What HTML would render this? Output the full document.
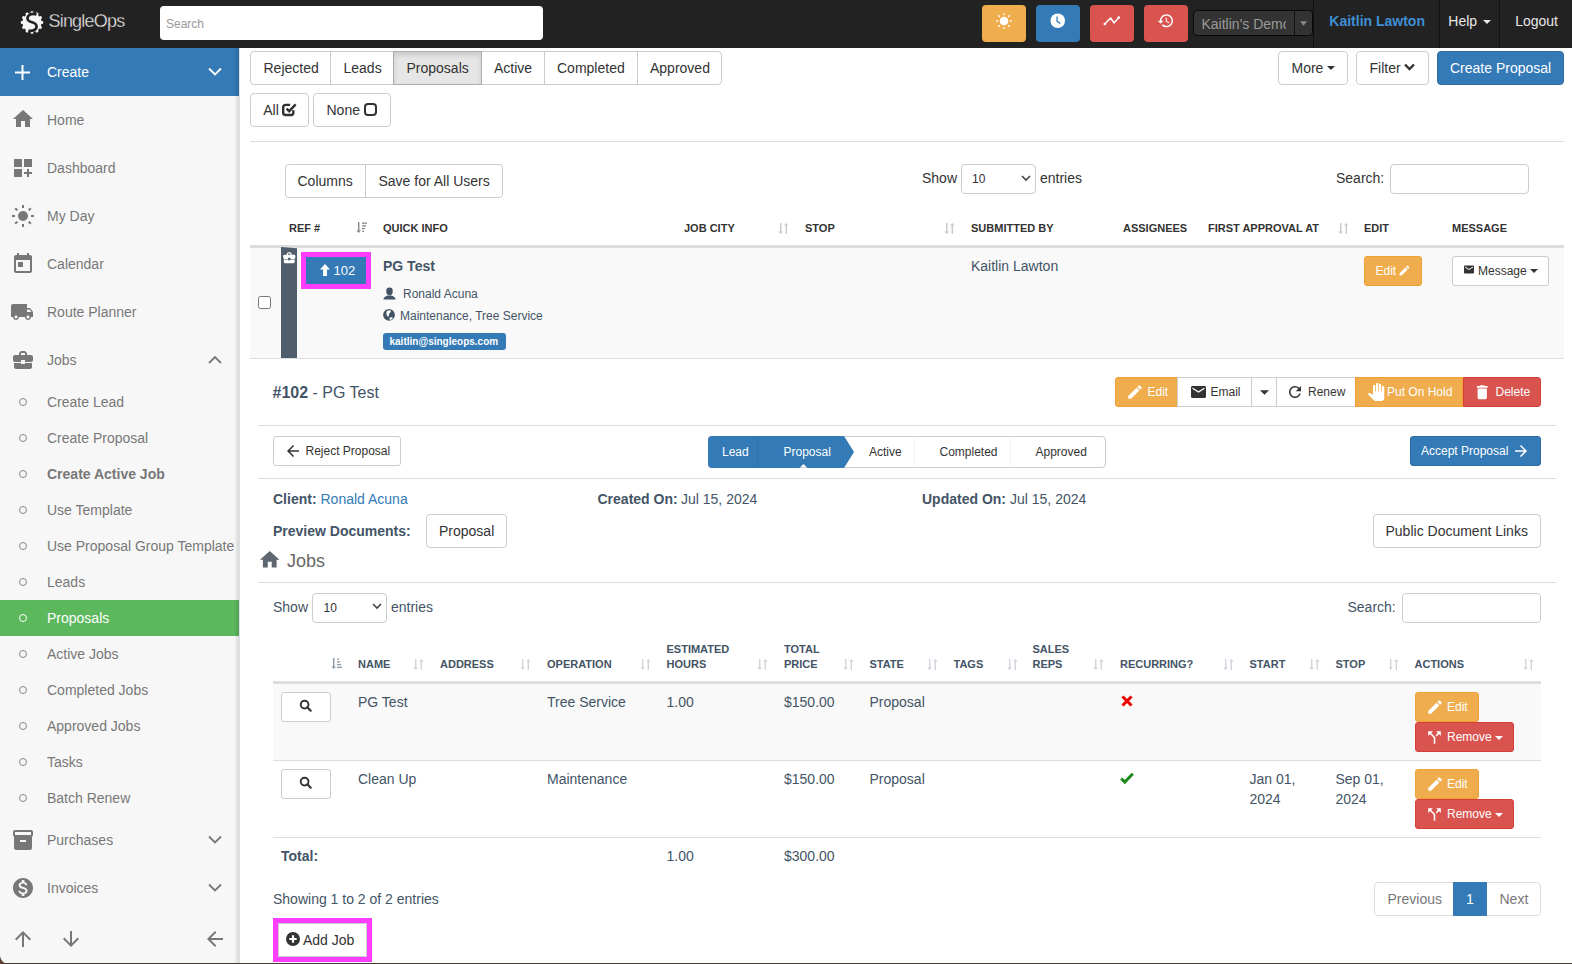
<!DOCTYPE html>
<html><head><meta charset="utf-8">
<style>
*{box-sizing:border-box;margin:0;padding:0}
html,body{width:1572px;height:964px;overflow:hidden;background:#fff;font-family:"Liberation Sans",sans-serif;font-size:14px;color:#333}
.a{position:absolute}
.t{position:absolute;white-space:nowrap;line-height:1}
svg{display:block;overflow:visible}
</style></head><body>
<div class="a" style="left:0px;top:0px;width:1572px;height:48px;background:#222"></div>
<svg class="a" style="left:18.5px;top:10.5px;" width="26" height="22" viewBox="0 0 26 22"><g fill="#f4f4f4"><rect x="11.6" y="0.3" width="2.8" height="4" rx="0.8" transform="rotate(0 13 11.5)"/><rect x="11.6" y="0.3" width="2.8" height="4" rx="0.8" transform="rotate(30 13 11.5)"/><rect x="11.6" y="0.3" width="2.8" height="4" rx="0.8" transform="rotate(60 13 11.5)"/><rect x="11.6" y="0.3" width="2.8" height="4" rx="0.8" transform="rotate(90 13 11.5)"/><rect x="11.6" y="0.3" width="2.8" height="4" rx="0.8" transform="rotate(120 13 11.5)"/><rect x="11.6" y="0.3" width="2.8" height="4" rx="0.8" transform="rotate(150 13 11.5)"/><rect x="11.6" y="0.3" width="2.8" height="4" rx="0.8" transform="rotate(180 13 11.5)"/><rect x="11.6" y="0.3" width="2.8" height="4" rx="0.8" transform="rotate(210 13 11.5)"/><rect x="11.6" y="0.3" width="2.8" height="4" rx="0.8" transform="rotate(240 13 11.5)"/><rect x="11.6" y="0.3" width="2.8" height="4" rx="0.8" transform="rotate(270 13 11.5)"/><rect x="11.6" y="0.3" width="2.8" height="4" rx="0.8" transform="rotate(300 13 11.5)"/><rect x="11.6" y="0.3" width="2.8" height="4" rx="0.8" transform="rotate(330 13 11.5)"/><circle cx="13" cy="11.5" r="9.6"/></g><path d="M17.5 3.6C13 1.6 7.6 4 8.6 8.2 9.6 12.2 17.6 10.6 17.6 15.4 17.6 19.2 12.6 20.6 9.4 19.4" stroke="#222" stroke-width="2.6" fill="none"/></svg>
<div class="t" style="left:48.5px;top:12.06px;font-size:18px;color:#f0f0f0;font-weight:normal;letter-spacing:-0.8px;-webkit-text-stroke:0.35px #222">SingleOps</div>
<div class="a" style="left:160px;top:6px;width:383px;height:34px;background:#fff;border-radius:4px"></div>
<div class="t" style="left:166.0px;top:18.34px;font-size:12px;color:#999;font-weight:normal;">Search</div>
<div class="a" style="left:982px;top:5px;width:44px;height:37px;background:#f0ad4e;border-radius:4px"></div>
<div class="a" style="left:1036px;top:5px;width:44px;height:37px;background:#337ab7;border-radius:4px"></div>
<div class="a" style="left:1090px;top:5px;width:44px;height:37px;background:#d9534f;border-radius:4px"></div>
<div class="a" style="left:1144px;top:5px;width:44px;height:37px;background:#d9534f;border-radius:4px"></div>
<svg class="a" style="left:995.8px;top:12.5px;" width="16" height="16" viewBox="0 0 16 16"><g fill="#fff"><rect x="7.3" y="0" width="1.4" height="2.2" rx="0.7" transform="rotate(0 8 8)"/><rect x="7.3" y="0" width="1.4" height="2.2" rx="0.7" transform="rotate(45 8 8)"/><rect x="7.3" y="0" width="1.4" height="2.2" rx="0.7" transform="rotate(90 8 8)"/><rect x="7.3" y="0" width="1.4" height="2.2" rx="0.7" transform="rotate(135 8 8)"/><rect x="7.3" y="0" width="1.4" height="2.2" rx="0.7" transform="rotate(180 8 8)"/><rect x="7.3" y="0" width="1.4" height="2.2" rx="0.7" transform="rotate(225 8 8)"/><rect x="7.3" y="0" width="1.4" height="2.2" rx="0.7" transform="rotate(270 8 8)"/><rect x="7.3" y="0" width="1.4" height="2.2" rx="0.7" transform="rotate(315 8 8)"/><circle cx="8" cy="8" r="4.3"/></g></svg>
<svg class="a" style="left:1050px;top:13.2px;" width="15.5" height="15.5" viewBox="0 0 16 16"><circle cx="8" cy="8" r="7.5" fill="#fff"/><path d="M7.3 4v4.6l3 2" stroke="#337ab7" stroke-width="1.3" fill="none" stroke-linecap="round"/></svg>
<svg class="a" style="left:1102px;top:16px;" width="19" height="11" viewBox="0 0 19 11"><g fill="#fff" stroke="#fff"><polyline points="2.8,8.1 8.6,2 12,6.9 16.8,1.6" fill="none" stroke-width="1.5" stroke-linejoin="round"/><circle cx="2.8" cy="8.1" r="1.3" stroke="none"/><circle cx="16.8" cy="1.6" r="1.3" stroke="none"/></g></svg>
<svg class="a" style="left:1157px;top:11.8px;" width="17.5" height="17.5" viewBox="0 0 24 24"><path d="M13 3c-4.97 0-9 4.03-9 9H1l3.89 3.89.07.14L9 12H6c0-3.87 3.13-7 7-7s7 3.13 7 7-3.13 7-7 7c-1.93 0-3.68-.79-4.94-2.06l-1.42 1.42C8.27 19.99 10.51 21 13 21c4.97 0 9-4.03 9-9s-4.03-9-9-9zm-1 5v5l4.28 2.54.72-1.21-3.5-2.08V8H12z" fill="#fff"/></svg>
<div class="a" style="left:1193px;top:10px;width:120px;height:26px;background:#333;border:1px solid #090909;border-radius:4px"></div>
<div class="a" style="left:1294px;top:11px;width:1px;height:24px;background:#111"></div>
<div class="t" style="left:1201.5px;top:16.75px;font-size:14px;color:#9a9a9a;width:84.5px;overflow:hidden;line-height:1">Kaitlin's Demo</div>
<svg class="a" style="left:1300px;top:21px;" width="7" height="5" viewBox="0 0 8 5"><path d="M0 0h8L4 5z" fill="#888"/></svg>
<div class="a" style="left:1313px;top:0px;width:1px;height:48px;background:#111"></div>
<div class="a" style="left:1439px;top:0px;width:1px;height:48px;background:#111"></div>
<div class="a" style="left:1499px;top:0px;width:1px;height:48px;background:#111"></div>
<div class="t" style="left:1329.3px;top:14.15px;font-size:14px;color:#3f8ed3;font-weight:bold;">Kaitlin Lawton</div>
<div class="t" style="left:1448.3px;top:14.15px;font-size:14px;color:#e8e8e8;font-weight:normal;">Help</div>
<svg class="a" style="left:1483px;top:20px;" width="8" height="4" viewBox="0 0 8 4"><path d="M0 0h8L4 4z" fill="#e8e8e8"/></svg>
<div class="t" style="left:1515.2px;top:14.15px;font-size:14px;color:#e8e8e8;font-weight:normal;">Logout</div>
<div class="a" style="left:0px;top:48px;width:239px;height:916px;background:#f7f7f7"></div>
<div class="a" style="left:0px;top:48px;width:239px;height:48px;background:#337ab7"></div>
<svg class="a" style="left:15px;top:65px;" width="15" height="15" viewBox="0 0 15 15"><path d="M6.5 0h2v6.5H15v2H8.5V15h-2V8.5H0v-2h6.5z" fill="#fff"/></svg>
<div class="t" style="left:47.0px;top:65.45px;font-size:14px;color:#fff;font-weight:normal;">Create</div>
<svg class="a" style="left:208px;top:67px;" width="14" height="10" viewBox="0 0 14 10"><path d="M1 1.5l6 6 6-6" stroke="#fff" stroke-width="1.8" fill="none"/></svg>
<svg class="a" style="left:11px;top:107px;" width="24" height="24" viewBox="0 0 24 24"><path d="M10 20v-6h4v6h5v-8h3L12 3 2 12h3v8z" fill="#777"/></svg>
<div class="t" style="left:47.0px;top:113.25px;font-size:14px;color:#777;font-weight:normal;">Home</div>
<svg class="a" style="left:11px;top:156px;" width="24" height="24" viewBox="0 0 24 24"><path d="M3 3h8v8H3zm10 0h8v8h-8zM3 13h8v8H3zm15 0h-2v3h-3v2h3v3h2v-3h3v-2h-3z" fill="#777"/></svg>
<div class="t" style="left:47.0px;top:161.25px;font-size:14px;color:#777;font-weight:normal;">Dashboard</div>
<svg class="a" style="left:11px;top:204px;" width="24" height="24" viewBox="0 0 24 24"><g fill="#777"><circle cx="12" cy="12" r="5"/><rect x="11" y="1" width="2" height="3" transform="rotate(0 12 12)"/><rect x="11" y="1" width="2" height="3" transform="rotate(45 12 12)"/><rect x="11" y="1" width="2" height="3" transform="rotate(90 12 12)"/><rect x="11" y="1" width="2" height="3" transform="rotate(135 12 12)"/><rect x="11" y="1" width="2" height="3" transform="rotate(180 12 12)"/><rect x="11" y="1" width="2" height="3" transform="rotate(225 12 12)"/><rect x="11" y="1" width="2" height="3" transform="rotate(270 12 12)"/><rect x="11" y="1" width="2" height="3" transform="rotate(315 12 12)"/></g></svg>
<div class="t" style="left:47.0px;top:209.25px;font-size:14px;color:#777;font-weight:normal;">My Day</div>
<svg class="a" style="left:11px;top:252px;" width="24" height="24" viewBox="0 0 24 24"><path d="M19 3h-1V1h-2v2H8V1H6v2H5c-1.11 0-1.99.9-1.99 2L3 19c0 1.1.89 2 2 2h14c1.1 0 2-.9 2-2V5c0-1.1-.9-2-2-2zm0 16H5V8h14v11zM7 10h5v5H7z" fill="#777"/></svg>
<div class="t" style="left:47.0px;top:257.25px;font-size:14px;color:#777;font-weight:normal;">Calendar</div>
<svg class="a" style="left:10px;top:300px;" width="24" height="24" viewBox="0 0 24 24"><path d="M20 8h-3V4H3c-1.1 0-2 .9-2 2v11h2c0 1.66 1.34 3 3 3s3-1.34 3-3h6c0 1.66 1.34 3 3 3s3-1.34 3-3h2v-5l-3-4zM6 18.5c-.83 0-1.5-.67-1.5-1.5s.67-1.5 1.5-1.5 1.5.67 1.5 1.5-.67 1.5-1.5 1.5zm13.5-9l1.96 2.5H17V9.5h2.5zm-1.5 9c-.83 0-1.5-.67-1.5-1.5s.67-1.5 1.5-1.5 1.5.67 1.5 1.5-.67 1.5-1.5 1.5z" fill="#777"/></svg>
<div class="t" style="left:47.0px;top:305.25px;font-size:14px;color:#777;font-weight:normal;">Route Planner</div>
<svg class="a" style="left:11px;top:348px;" width="24" height="24" viewBox="0 0 24 24"><path d="M10 16v-1H3.01L3 19c0 1.11.89 2 2 2h14c1.11 0 2-.89 2-2v-4h-7v1h-4zm10-9h-4.01V5l-2-2h-4l-2 2v2H4c-1.1 0-2 .9-2 2v3c0 1.11.89 2 2 2h6v-2h4v2h6c1.1 0 2-.9 2-2V9c0-1.1-.9-2-2-2zm-6 0h-4V5h4v2z" fill="#777"/></svg>
<div class="t" style="left:47.0px;top:353.25px;font-size:14px;color:#777;font-weight:normal;">Jobs</div>
<svg class="a" style="left:208px;top:355px;" width="14" height="10" viewBox="0 0 14 10"><path d="M1 8l6-6 6 6" stroke="#777" stroke-width="1.8" fill="none"/></svg>
<div class="a" style="left:19px;top:398px;width:8px;height:8px;border:1px solid #888;border-radius:50%"></div>
<div class="t" style="left:47.0px;top:395.15px;font-size:14px;color:#777;font-weight:normal;">Create Lead</div>
<div class="a" style="left:19px;top:434px;width:8px;height:8px;border:1px solid #888;border-radius:50%"></div>
<div class="t" style="left:47.0px;top:431.15px;font-size:14px;color:#777;font-weight:normal;">Create Proposal</div>
<div class="a" style="left:19px;top:470px;width:8px;height:8px;border:1px solid #888;border-radius:50%"></div>
<div class="t" style="left:47.0px;top:467.15px;font-size:14px;color:#777;font-weight:bold;">Create Active Job</div>
<div class="a" style="left:19px;top:506px;width:8px;height:8px;border:1px solid #888;border-radius:50%"></div>
<div class="t" style="left:47.0px;top:503.15px;font-size:14px;color:#777;font-weight:normal;">Use Template</div>
<div class="a" style="left:19px;top:542px;width:8px;height:8px;border:1px solid #888;border-radius:50%"></div>
<div class="t" style="left:47.0px;top:539.15px;font-size:14px;color:#777;font-weight:normal;">Use Proposal Group Template</div>
<div class="a" style="left:19px;top:578px;width:8px;height:8px;border:1px solid #888;border-radius:50%"></div>
<div class="t" style="left:47.0px;top:575.15px;font-size:14px;color:#777;font-weight:normal;">Leads</div>
<div class="a" style="left:0px;top:600px;width:239px;height:36px;background:#5cb85c"></div>
<div class="a" style="left:19px;top:614px;width:8px;height:8px;border:1px solid #fff;border-radius:50%"></div>
<div class="t" style="left:47.0px;top:611.15px;font-size:14px;color:#fff;font-weight:normal;">Proposals</div>
<div class="a" style="left:19px;top:650px;width:8px;height:8px;border:1px solid #888;border-radius:50%"></div>
<div class="t" style="left:47.0px;top:647.15px;font-size:14px;color:#777;font-weight:normal;">Active Jobs</div>
<div class="a" style="left:19px;top:686px;width:8px;height:8px;border:1px solid #888;border-radius:50%"></div>
<div class="t" style="left:47.0px;top:683.15px;font-size:14px;color:#777;font-weight:normal;">Completed Jobs</div>
<div class="a" style="left:19px;top:722px;width:8px;height:8px;border:1px solid #888;border-radius:50%"></div>
<div class="t" style="left:47.0px;top:719.15px;font-size:14px;color:#777;font-weight:normal;">Approved Jobs</div>
<div class="a" style="left:19px;top:758px;width:8px;height:8px;border:1px solid #888;border-radius:50%"></div>
<div class="t" style="left:47.0px;top:755.15px;font-size:14px;color:#777;font-weight:normal;">Tasks</div>
<div class="a" style="left:19px;top:794px;width:8px;height:8px;border:1px solid #888;border-radius:50%"></div>
<div class="t" style="left:47.0px;top:791.15px;font-size:14px;color:#777;font-weight:normal;">Batch Renew</div>
<svg class="a" style="left:11px;top:828px;" width="24" height="24" viewBox="0 0 24 24"><path d="M20 2H4c-1 0-2 .9-2 2v3.01c0 .72.43 1.34 1 1.69V20c0 1.1 1.1 2 2 2h14c.9 0 2-.9 2-2V8.7c.57-.35 1-.97 1-1.69V4c0-1.1-1-2-2-2zm-5 12H9v-2h6v2zm5-7H4V4l16-.02V7z" fill="#777"/></svg>
<div class="t" style="left:47.0px;top:832.85px;font-size:14px;color:#777;font-weight:normal;">Purchases</div>
<svg class="a" style="left:208px;top:835px;" width="14" height="10" viewBox="0 0 14 10"><path d="M1 1.5l6 6 6-6" stroke="#777" stroke-width="1.8" fill="none"/></svg>
<svg class="a" style="left:11px;top:876px;" width="24" height="24" viewBox="0 0 24 24"><path d="M12 2C6.48 2 2 6.48 2 12s4.48 10 10 10 10-4.48 10-10S17.52 2 12 2zm1.41 16.09V20h-2.67v-1.93c-1.71-.36-3.16-1.46-3.27-3.4h1.96c.1 1.05.82 1.87 2.65 1.87 1.96 0 2.4-.98 2.4-1.59 0-.83-.44-1.61-2.67-2.14-2.48-.6-4.18-1.62-4.18-3.67 0-1.72 1.39-2.84 3.11-3.21V4h2.67v1.95c1.86.45 2.79 1.86 2.85 3.39H14.3c-.05-1.11-.64-1.87-2.22-1.87-1.5 0-2.4.68-2.4 1.64 0 .84.65 1.39 2.67 1.91s4.18 1.39 4.18 3.91c-.01 1.83-1.38 2.83-3.12 3.16z" fill="#777"/></svg>
<div class="t" style="left:47.0px;top:881.15px;font-size:14px;color:#777;font-weight:normal;">Invoices</div>
<svg class="a" style="left:208px;top:883px;" width="14" height="10" viewBox="0 0 14 10"><path d="M1 1.5l6 6 6-6" stroke="#777" stroke-width="1.8" fill="none"/></svg>
<div class="a" style="left:234px;top:48px;width:5px;height:916px;background:linear-gradient(to right,rgba(0,0,0,0),rgba(0,0,0,.13))"></div>
<div class="a" style="left:239px;top:48px;width:1px;height:916px;background:#dce2e9"></div>
<svg class="a" style="left:11px;top:927px;" width="24" height="24" viewBox="0 0 24 24"><path d="M4 12l1.41 1.41L11 7.83V20h2V7.83l5.58 5.59L20 12l-8-8-8 8z" fill="#777"/></svg>
<svg class="a" style="left:59px;top:927px;" width="24" height="24" viewBox="0 0 24 24"><path d="M20 12l-1.41-1.41L13 16.17V4h-2v12.17l-5.58-5.59L4 12l8 8 8-8z" fill="#777"/></svg>
<svg class="a" style="left:203px;top:927px;" width="24" height="24" viewBox="0 0 24 24"><path d="M20 11H7.83l5.59-5.59L12 4l-8 8 8 8 1.41-1.41L7.83 13H20v-2z" fill="#777"/></svg>
<div class="a" style="left:250px;top:51px;width:472px;height:34px;background:#fff;border:1px solid #ccc;border-radius:4px"></div>
<div class="a" style="left:330px;top:51px;width:1px;height:34px;background:#ccc"></div>
<div class="a" style="left:393px;top:51px;width:1px;height:34px;background:#ccc"></div>
<div class="a" style="left:481px;top:51px;width:1px;height:34px;background:#ccc"></div>
<div class="a" style="left:544px;top:51px;width:1px;height:34px;background:#ccc"></div>
<div class="a" style="left:637px;top:51px;width:1px;height:34px;background:#ccc"></div>
<div class="a" style="left:394px;top:51px;width:87px;height:34px;background:#e6e6e6;box-shadow:inset 0 3px 5px rgba(0,0,0,.125);border-top:1px solid #adadad;border-bottom:1px solid #adadad"></div>
<div class="a" style="left:393px;top:51px;width:1px;height:34px;background:#adadad"></div>
<div class="a" style="left:481px;top:51px;width:1px;height:34px;background:#adadad"></div>
<div class="t" style="left:263.5px;top:61.25px;font-size:14px;color:#333;font-weight:normal;">Rejected</div>
<div class="t" style="left:343.5px;top:61.25px;font-size:14px;color:#333;font-weight:normal;">Leads</div>
<div class="t" style="left:406.5px;top:61.25px;font-size:14px;color:#333;font-weight:normal;">Proposals</div>
<div class="t" style="left:494.0px;top:61.25px;font-size:14px;color:#333;font-weight:normal;">Active</div>
<div class="t" style="left:557.0px;top:61.25px;font-size:14px;color:#333;font-weight:normal;">Completed</div>
<div class="t" style="left:650.0px;top:61.25px;font-size:14px;color:#333;font-weight:normal;">Approved</div>
<div class="a" style="left:250px;top:93px;width:59px;height:34px;background:#fff;border:1px solid #ccc;border-radius:4px"></div>
<div class="t" style="left:263.2px;top:103.25px;font-size:14px;color:#333;font-weight:normal;">All</div>
<svg class="a" style="left:282px;top:101.7px;" width="15" height="14" viewBox="0 0 15 14"><path d="M11.3 8.2v2.6a2.2 2.2 0 0 1-2.2 2.2H3.4a2.2 2.2 0 0 1-2.2-2.2V5.1a2.2 2.2 0 0 1 2.2-2.2h4.8" stroke="#333" stroke-width="2.4" fill="none"/><path d="M4.6 6.6l2.6 2.6 6.5-6.8" stroke="#333" stroke-width="2.5" fill="none"/></svg>
<div class="a" style="left:313px;top:93px;width:78px;height:34px;background:#fff;border:1px solid #ccc;border-radius:4px"></div>
<div class="t" style="left:326.5px;top:103.25px;font-size:14px;color:#333;font-weight:normal;">None</div>
<div class="a" style="left:363.8px;top:103.1px;width:12.8px;height:12.8px;border:2.6px solid #333;border-radius:4px"></div>
<div class="a" style="left:1278px;top:51px;width:70px;height:34px;background:#fff;border:1px solid #ccc;border-radius:4px"></div>
<div class="t" style="left:1291.5px;top:61.25px;font-size:14px;color:#333;font-weight:normal;">More</div>
<svg class="a" style="left:1327px;top:66px;" width="8" height="4" viewBox="0 0 8 4"><path d="M0 0h8L4 4z" fill="#333"/></svg>
<div class="a" style="left:1356px;top:51px;width:73px;height:34px;background:#fff;border:1px solid #ccc;border-radius:4px"></div>
<div class="t" style="left:1369.5px;top:61.25px;font-size:14px;color:#333;font-weight:normal;">Filter</div>
<svg class="a" style="left:1404px;top:63px;" width="11" height="8" viewBox="0 0 11 8"><path d="M1 1.5l4.5 4.5 4.5-4.5" stroke="#333" stroke-width="2.4" fill="none"/></svg>
<div class="a" style="left:1437px;top:51px;width:127px;height:34px;background:#337ab7;border:1px solid #2e6da4;border-radius:4px"></div>
<div class="t" style="left:1450.0px;top:61.25px;font-size:14px;color:#fff;font-weight:normal;">Create Proposal</div>
<div class="a" style="left:250px;top:141px;width:1314px;height:1px;background:#ddd"></div>
<div class="a" style="left:285px;top:164px;width:218px;height:34px;background:#fff;border:1px solid #ccc;border-radius:4px"></div>
<div class="a" style="left:365px;top:164px;width:1px;height:34px;background:#ccc"></div>
<div class="t" style="left:297.5px;top:174.25px;font-size:14px;color:#333;font-weight:normal;">Columns</div>
<div class="t" style="left:378.5px;top:174.25px;font-size:14px;color:#333;font-weight:normal;">Save for All Users</div>
<div class="t" style="left:922.0px;top:171.15px;font-size:14px;color:#333;font-weight:normal;">Show</div>
<div class="a" style="left:961px;top:164px;width:75px;height:30px;background:#fff;border:1px solid #ccc;border-radius:4px"></div>
<div class="t" style="left:972.0px;top:173.34px;font-size:12px;color:#333;font-weight:normal;">10</div>
<svg class="a" style="left:1021px;top:175px;" width="10" height="7" viewBox="0 0 10 7"><path d="M1 1l4 4 4-4" stroke="#444" stroke-width="1.6" fill="none"/></svg>
<div class="t" style="left:1040.0px;top:171.15px;font-size:14px;color:#333;font-weight:normal;">entries</div>
<div class="t" style="left:1336.0px;top:171.15px;font-size:14px;color:#333;font-weight:normal;">Search:</div>
<div class="a" style="left:1390px;top:164px;width:139px;height:30px;background:#fff;border:1px solid #ccc;border-radius:4px"></div>
<div class="t" style="left:289.0px;top:222.69px;font-size:11px;color:#333;font-weight:bold;">REF #</div>
<div class="t" style="left:383.0px;top:222.69px;font-size:11px;color:#333;font-weight:bold;">QUICK INFO</div>
<div class="t" style="left:684.0px;top:222.69px;font-size:11px;color:#333;font-weight:bold;">JOB CITY</div>
<div class="t" style="left:805.0px;top:222.69px;font-size:11px;color:#333;font-weight:bold;">STOP</div>
<div class="t" style="left:971.0px;top:222.69px;font-size:11px;color:#333;font-weight:bold;">SUBMITTED BY</div>
<div class="t" style="left:1123.0px;top:222.69px;font-size:11px;color:#333;font-weight:bold;">ASSIGNEES</div>
<div class="t" style="left:1208.0px;top:222.69px;font-size:11px;color:#333;font-weight:bold;">FIRST APPROVAL AT</div>
<div class="t" style="left:1364.0px;top:222.69px;font-size:11px;color:#333;font-weight:bold;">EDIT</div>
<div class="t" style="left:1452.0px;top:222.69px;font-size:11px;color:#333;font-weight:bold;">MESSAGE</div>
<svg class="a" style="left:356px;top:222px;" width="11" height="11" viewBox="0 0 11 11"><g fill="#888"><path d="M2 0h1.4v8.5H5L2.7 11 0.4 8.5H2z"/><rect x="6" y="0.5" width="5" height="1.3"/><rect x="6" y="3.2" width="4" height="1.3"/><rect x="6" y="5.9" width="3" height="1.3"/><rect x="6" y="8.6" width="2" height="1.3"/></g></svg>
<svg class="a" style="left:778px;top:223px;" width="11" height="11" viewBox="0 0 11 11"><g fill="#c8c8c8"><path d="M2 0h1.4v8.5H5L2.7 11 0.4 8.5H2z"/><path d="M7.6 11h1.4V2.5h1.6L8.3 0 6 2.5h1.6z"/></g></svg>
<svg class="a" style="left:944px;top:223px;" width="11" height="11" viewBox="0 0 11 11"><g fill="#c8c8c8"><path d="M2 0h1.4v8.5H5L2.7 11 0.4 8.5H2z"/><path d="M7.6 11h1.4V2.5h1.6L8.3 0 6 2.5h1.6z"/></g></svg>
<svg class="a" style="left:1338px;top:223px;" width="11" height="11" viewBox="0 0 11 11"><g fill="#c8c8c8"><path d="M2 0h1.4v8.5H5L2.7 11 0.4 8.5H2z"/><path d="M7.6 11h1.4V2.5h1.6L8.3 0 6 2.5h1.6z"/></g></svg>
<div class="a" style="left:250px;top:245px;width:1314px;height:3px;background:#ddd"></div>
<div class="a" style="left:250px;top:248px;width:1314px;height:110px;background:#f9f9f9"></div>
<div class="a" style="left:250px;top:358px;width:1314px;height:1px;background:#ddd"></div>
<div class="a" style="left:258px;top:296px;width:13px;height:13px;background:#fff;border:1px solid #767676;border-radius:2.5px"></div>
<svg class="a" style="left:281px;top:247px;" width="16" height="111" viewBox="0 0 16 111"><path d="M0 0L16 1.3V111H0z" fill="#4f5d6d"/></svg>
<svg class="a" style="left:281.8px;top:251.2px;" width="14.5" height="13.5" viewBox="0 0 24 22"><path d="M10 15v-1H3.01L3 18c0 1.11.89 2 2 2h14c1.11 0 2-.89 2-2v-4h-7v1h-4zm10-9h-4.01V4l-2-2h-4l-2 2v2H4c-1.1 0-2 .9-2 2v3c0 1.11.89 2 2 2h6v-2h4v2h6c1.1 0 2-.9 2-2V8c0-1.1-.9-2-2-2zm-6 0h-4V4h4v2z" fill="#fff"/></svg>
<div class="a" style="left:301px;top:252px;width:70px;height:37px;background:#ff3dff"></div>
<div class="a" style="left:306px;top:257px;width:60px;height:27px;background:#337ab7"></div>
<svg class="a" style="left:320px;top:264px;" width="10" height="12" viewBox="0 0 10 12"><path d="M5 0L0 5.5h3V12h4V5.5h3z" fill="#fff"/></svg>
<div class="t" style="left:333.5px;top:264.30px;font-size:13px;color:#fff;font-weight:normal;">102</div>
<div class="t" style="left:383.0px;top:259.35px;font-size:14px;color:#435466;font-weight:bold;">PG Test</div>
<svg class="a" style="left:382.5px;top:286.5px;" width="13" height="13" viewBox="0 0 13 13"><rect x="3.3" y="0.4" width="6.4" height="7.8" rx="3.1" fill="#435466"/><path d="M0.3 12.4C0.6 10.6 2.4 9.3 4.4 8.5H8.6C10.6 9.3 12.4 10.6 12.7 12.4z" fill="#435466"/></svg>
<div class="t" style="left:403.0px;top:287.84px;font-size:12px;color:#435466;font-weight:normal;">Ronald Acuna</div>
<svg class="a" style="left:383px;top:309px;" width="12" height="12" viewBox="0 0 12 12"><circle cx="6" cy="5.9" r="5.9" fill="#435466"/><path d="M3.5 2.8L5 1.2L8 1.5L7.3 3.4L6.1 4.7L5.9 6.5L5.1 7.9L3.9 6.6L3.3 4.3z M6.1 9.8L7.5 8.2L9.8 8.3L8.9 10.2L7 10.9z" fill="#f9f9f9"/></svg>
<div class="t" style="left:400.0px;top:309.64px;font-size:12px;color:#435466;font-weight:normal;">Maintenance, Tree Service</div>
<div class="a" style="left:383px;top:333px;width:123px;height:17px;background:#337ab7;border-radius:3px"></div>
<div class="t" style="left:389.5px;top:337.14px;font-size:10px;color:#fff;font-weight:bold;">kaitlin@singleops.com</div>
<div class="t" style="left:971.0px;top:259.15px;font-size:14px;color:#435466;font-weight:normal;">Kaitlin Lawton</div>
<div class="a" style="left:1364px;top:256px;width:58px;height:30px;background:#f0ad4e;border:1px solid #eea236;border-radius:3px"></div>
<div class="t" style="left:1375.5px;top:265.34px;font-size:12px;color:#fff;font-weight:normal;">Edit</div>
<svg class="a" style="left:1397.5px;top:264px;" width="13" height="13" viewBox="0 0 24 24"><path d="M3 17.25V21h3.75L17.81 9.94l-3.75-3.75L3 17.25zM20.71 7.04a1 1 0 0 0 0-1.41l-2.34-2.34a1 1 0 0 0-1.41 0l-1.83 1.83 3.75 3.75 1.83-1.83z" fill="#fff"/></svg>
<div class="a" style="left:1452px;top:256px;width:97px;height:30px;background:#fff;border:1px solid #ccc;border-radius:4px;border-radius:3px"></div>
<svg class="a" style="left:1464px;top:265px;" width="10" height="9" viewBox="0 0 20 16"><path d="M18 0H2C.9 0 0 .9 0 2v12c0 1.1.9 2 2 2h16c1.1 0 2-.9 2-2V2c0-1.1-.9-2-2-2zm0 4l-8 5-8-5V2l8 5 8-5v2z" fill="#333"/></svg>
<div class="t" style="left:1478.0px;top:265.34px;font-size:12px;color:#333;font-weight:normal;">Message</div>
<svg class="a" style="left:1530px;top:269px;" width="8" height="4" viewBox="0 0 8 4"><path d="M0 0h8L4 4z" fill="#333"/></svg>
<div class="t" style="left:272.5px;top:385.3px;font-size:16px;color:#435466"><b>#102</b> - PG Test</div>
<div class="a" style="left:1115px;top:377px;width:426px;height:30px;border-radius:3px;overflow:hidden;background:#fff"></div>
<div class="a" style="left:1115px;top:377px;width:63px;height:30px;background:#f0ad4e;border:1px solid #eea236;border-radius:3px 0 0 3px"></div>
<svg class="a" style="left:1126px;top:383px;" width="18" height="18" viewBox="0 0 24 24"><path d="M3 17.25V21h3.75L17.81 9.94l-3.75-3.75L3 17.25zM20.71 7.04a1 1 0 0 0 0-1.41l-2.34-2.34a1 1 0 0 0-1.41 0l-1.83 1.83 3.75 3.75 1.83-1.83z" fill="#fff"/></svg>
<div class="t" style="left:1147.5px;top:385.84px;font-size:12px;color:#fff;font-weight:normal;">Edit</div>
<div class="a" style="left:1177px;top:377px;width:179px;height:30px;border:1px solid #ccc;background:#fff"></div>
<div class="a" style="left:1251px;top:377px;width:1px;height:30px;background:#ccc"></div>
<div class="a" style="left:1276px;top:377px;width:1px;height:30px;background:#ccc"></div>
<svg class="a" style="left:1191px;top:386px;" width="15" height="12" viewBox="0 0 20 16"><path d="M18 0H2C.9 0 0 .9 0 2v12c0 1.1.9 2 2 2h16c1.1 0 2-.9 2-2V2c0-1.1-.9-2-2-2zm0 4l-8 5-8-5V2l8 5 8-5v2z" fill="#333"/></svg>
<div class="t" style="left:1210.5px;top:385.84px;font-size:12px;color:#333;font-weight:normal;">Email</div>
<svg class="a" style="left:1260px;top:390px;" width="9" height="5" viewBox="0 0 8 4"><path d="M0 0h8L4 4z" fill="#333"/></svg>
<svg class="a" style="left:1286px;top:383px;" width="18" height="18" viewBox="0 0 24 24"><path d="M17.65 6.35A7.958 7.958 0 0 0 12 4c-4.42 0-7.99 3.58-7.99 8s3.57 8 7.99 8c3.73 0 6.84-2.55 7.73-6h-2.08A5.99 5.99 0 0 1 12 18c-3.31 0-6-2.69-6-6s2.69-6 6-6c1.66 0 3.14.69 4.22 1.78L13 11h7V4l-2.35 2.35z" fill="#333"/></svg>
<div class="t" style="left:1308.0px;top:385.84px;font-size:12px;color:#333;font-weight:normal;">Renew</div>
<div class="a" style="left:1355px;top:377px;width:108px;height:30px;background:#f0ad4e;border:1px solid #eea236"></div>
<svg class="a" style="left:1366.5px;top:383px;" width="18" height="18" viewBox="0 0 24 24"><path d="M23 5.5V20c0 2.2-1.8 4-4 4h-7.3c-1.08 0-2.1-.43-2.85-1.19L1 14.83s1.26-1.23 1.3-1.25c.22-.19.49-.29.79-.29.22 0 .42.06.6.16.04.01 4.31 2.46 4.31 2.46V4c0-.83.67-1.5 1.5-1.5S11 3.17 11 4v7h1V1.5c0-.83.67-1.5 1.5-1.5S15 .67 15 1.5V11h1V2.5c0-.83.67-1.5 1.5-1.5s1.5.67 1.5 1.5V11h1V5.5c0-.83.67-1.5 1.5-1.5s1.5.67 1.5 1.5z" fill="#fff"/></svg>
<div class="t" style="left:1387.0px;top:385.84px;font-size:12px;color:#fff;font-weight:normal;">Put On Hold</div>
<div class="a" style="left:1463px;top:377px;width:78px;height:30px;background:#d9534f;border:1px solid #d43f3a;border-radius:0 3px 3px 0"></div>
<svg class="a" style="left:1473px;top:383px;" width="18.5" height="18.5" viewBox="0 0 24 24"><path d="M6 19c0 1.1.9 2 2 2h8c1.1 0 2-.9 2-2V7H6v12zM19 4h-3.5l-1-1h-5l-1 1H5v2h14V4z" fill="#fff"/></svg>
<div class="t" style="left:1495.5px;top:385.84px;font-size:12px;color:#fff;font-weight:normal;">Delete</div>
<div class="a" style="left:258px;top:425px;width:1298px;height:1px;background:#ddd"></div>
<div class="a" style="left:273px;top:436px;width:128px;height:30px;background:#fff;border:1px solid #ccc;border-radius:4px;border-radius:3px"></div>
<svg class="a" style="left:284px;top:442px;" width="18" height="18" viewBox="0 0 24 24"><path d="M20 11H7.83l5.59-5.59L12 4l-8 8 8 8 1.41-1.41L7.83 13H20v-2z" fill="#333"/></svg>
<div class="t" style="left:305.5px;top:445.04px;font-size:12px;color:#333;font-weight:normal;">Reject Proposal</div>
<div class="a" style="left:708px;top:436px;width:398px;height:32px;background:#fff;border:1px solid #ccc;border-radius:4px"></div>
<div class="a" style="left:914px;top:437px;width:1px;height:30px;background:#f2f2f2"></div>
<div class="a" style="left:1010px;top:437px;width:1px;height:30px;background:#f2f2f2"></div>
<svg class="a" style="left:708px;top:436px;" width="147" height="32" viewBox="0 0 147 32"><path d="M4 0H136L146 16L136 32H99.5L95.5 28L91.5 32H4A4 4 0 0 1 0 28V4A4 4 0 0 1 4 0z" fill="#337ab7"/><rect x="49" y="0" width="1" height="32" fill="#2f71aa"/></svg>
<div class="t" style="left:722.0px;top:445.74px;font-size:12px;color:#fff;font-weight:normal;">Lead</div>
<div class="t" style="left:783.5px;top:445.74px;font-size:12px;color:#fff;font-weight:normal;">Proposal</div>
<div class="t" style="left:869.0px;top:445.74px;font-size:12px;color:#333;font-weight:normal;">Active</div>
<div class="t" style="left:939.5px;top:445.74px;font-size:12px;color:#333;font-weight:normal;">Completed</div>
<div class="t" style="left:1035.5px;top:445.74px;font-size:12px;color:#333;font-weight:normal;">Approved</div>
<div class="a" style="left:1410px;top:436px;width:131px;height:30px;background:#337ab7;border:1px solid #2e6da4;border-radius:3px"></div>
<div class="t" style="left:1421.0px;top:445.04px;font-size:12px;color:#fff;font-weight:normal;">Accept Proposal</div>
<svg class="a" style="left:1512px;top:442px;" width="18" height="18" viewBox="0 0 24 24"><path d="M12 4l-1.41 1.41L16.17 11H4v2h12.17l-5.58 5.59L12 20l8-8z" fill="#fff"/></svg>
<div class="a" style="left:258px;top:478px;width:1298px;height:1px;background:#ddd"></div>
<div class="t" style="left:273.0px;top:492.45px;font-size:14px;color:#435466;font-weight:bold;">Client:</div>
<div class="t" style="left:320.5px;top:492.45px;font-size:14px;color:#337ab7;font-weight:normal;">Ronald Acuna</div>
<div class="t" style="left:597.5px;top:492.45px;font-size:14px;color:#435466;font-weight:bold;">Created On:</div>
<div class="t" style="left:681.0px;top:492.45px;font-size:14px;color:#435466;font-weight:normal;">Jul 15, 2024</div>
<div class="t" style="left:922.0px;top:492.45px;font-size:14px;color:#435466;font-weight:bold;">Updated On:</div>
<div class="t" style="left:1010.0px;top:492.45px;font-size:14px;color:#435466;font-weight:normal;">Jul 15, 2024</div>
<div class="t" style="left:273.0px;top:524.35px;font-size:14px;color:#435466;font-weight:bold;">Preview Documents:</div>
<div class="a" style="left:426px;top:514px;width:81px;height:34px;background:#fff;border:1px solid #ccc;border-radius:4px"></div>
<div class="t" style="left:439.0px;top:524.35px;font-size:14px;color:#333;font-weight:normal;">Proposal</div>
<div class="a" style="left:1373px;top:514px;width:168px;height:34px;background:#fff;border:1px solid #ccc;border-radius:4px"></div>
<div class="t" style="left:1385.5px;top:524.35px;font-size:14px;color:#333;font-weight:normal;">Public Document Links</div>
<svg class="a" style="left:258px;top:548.2px;" width="23.5" height="23.5" viewBox="0 0 24 24"><path d="M10 20v-6h4v6h5v-8h3L12 3 2 12h3v8z" fill="#5f6770"/></svg>
<div class="t" style="left:287.0px;top:551.56px;font-size:18px;color:#666;font-weight:normal;">Jobs</div>
<div class="a" style="left:258px;top:582px;width:1298px;height:1px;background:#ddd"></div>
<div class="t" style="left:273.0px;top:599.85px;font-size:14px;color:#435466;font-weight:normal;">Show</div>
<div class="a" style="left:312px;top:593px;width:75px;height:30px;background:#fff;border:1px solid #ccc;border-radius:4px"></div>
<div class="t" style="left:323.5px;top:601.84px;font-size:12px;color:#333;font-weight:normal;">10</div>
<svg class="a" style="left:372px;top:603px;" width="10" height="7" viewBox="0 0 10 7"><path d="M1 1l4 4 4-4" stroke="#444" stroke-width="1.6" fill="none"/></svg>
<div class="t" style="left:391.0px;top:599.85px;font-size:14px;color:#435466;font-weight:normal;">entries</div>
<div class="t" style="left:1347.5px;top:599.85px;font-size:14px;color:#435466;font-weight:normal;">Search:</div>
<div class="a" style="left:1402px;top:593px;width:139px;height:30px;background:#fff;border:1px solid #ccc;border-radius:4px"></div>
<div class="t" style="left:358.0px;top:658.89px;font-size:11px;color:#435466;font-weight:bold;">NAME</div>
<div class="t" style="left:440.0px;top:658.89px;font-size:11px;color:#435466;font-weight:bold;">ADDRESS</div>
<div class="t" style="left:547.0px;top:658.89px;font-size:11px;color:#435466;font-weight:bold;">OPERATION</div>
<div class="t" style="left:953.5px;top:658.89px;font-size:11px;color:#435466;font-weight:bold;">TAGS</div>
<div class="t" style="left:1120.0px;top:658.89px;font-size:11px;color:#435466;font-weight:bold;">RECURRING?</div>
<div class="t" style="left:1249.5px;top:658.89px;font-size:11px;color:#435466;font-weight:bold;">START</div>
<div class="t" style="left:1335.5px;top:658.89px;font-size:11px;color:#435466;font-weight:bold;">STOP</div>
<div class="t" style="left:1414.5px;top:658.89px;font-size:11px;color:#435466;font-weight:bold;">ACTIONS</div>
<div class="t" style="left:869.5px;top:658.89px;font-size:11px;color:#435466;font-weight:bold;">STATE</div>
<div class="t" style="left:666.5px;top:643.89px;font-size:11px;color:#435466;font-weight:bold;">ESTIMATED</div>
<div class="t" style="left:666.5px;top:658.89px;font-size:11px;color:#435466;font-weight:bold;">HOURS</div>
<div class="t" style="left:784.0px;top:643.89px;font-size:11px;color:#435466;font-weight:bold;">TOTAL</div>
<div class="t" style="left:784.0px;top:658.89px;font-size:11px;color:#435466;font-weight:bold;">PRICE</div>
<div class="t" style="left:1032.5px;top:643.89px;font-size:11px;color:#435466;font-weight:bold;">SALES</div>
<div class="t" style="left:1032.5px;top:658.89px;font-size:11px;color:#435466;font-weight:bold;">REPS</div>
<svg class="a" style="left:331px;top:658px;" width="11" height="11" viewBox="0 0 11 11"><g fill="#8a97a4"><path d="M2 0h1.4v8.5H5L2.7 11 0.4 8.5H2z"/><rect x="6" y="0.5" width="2" height="1.3"/><rect x="6" y="3.2" width="3" height="1.3"/><rect x="6" y="5.9" width="4" height="1.3"/><rect x="6" y="8.6" width="5" height="1.3"/></g></svg>
<svg class="a" style="left:413px;top:659px;" width="11" height="11" viewBox="0 0 11 11"><g fill="#cfd5db"><path d="M2 0h1.4v8.5H5L2.7 11 0.4 8.5H2z"/><path d="M7.6 11h1.4V2.5h1.6L8.3 0 6 2.5h1.6z"/></g></svg>
<svg class="a" style="left:519.5px;top:659px;" width="11" height="11" viewBox="0 0 11 11"><g fill="#cfd5db"><path d="M2 0h1.4v8.5H5L2.7 11 0.4 8.5H2z"/><path d="M7.6 11h1.4V2.5h1.6L8.3 0 6 2.5h1.6z"/></g></svg>
<svg class="a" style="left:640px;top:659px;" width="11" height="11" viewBox="0 0 11 11"><g fill="#cfd5db"><path d="M2 0h1.4v8.5H5L2.7 11 0.4 8.5H2z"/><path d="M7.6 11h1.4V2.5h1.6L8.3 0 6 2.5h1.6z"/></g></svg>
<svg class="a" style="left:757px;top:659px;" width="11" height="11" viewBox="0 0 11 11"><g fill="#cfd5db"><path d="M2 0h1.4v8.5H5L2.7 11 0.4 8.5H2z"/><path d="M7.6 11h1.4V2.5h1.6L8.3 0 6 2.5h1.6z"/></g></svg>
<svg class="a" style="left:842.5px;top:659px;" width="11" height="11" viewBox="0 0 11 11"><g fill="#cfd5db"><path d="M2 0h1.4v8.5H5L2.7 11 0.4 8.5H2z"/><path d="M7.6 11h1.4V2.5h1.6L8.3 0 6 2.5h1.6z"/></g></svg>
<svg class="a" style="left:927px;top:659px;" width="11" height="11" viewBox="0 0 11 11"><g fill="#cfd5db"><path d="M2 0h1.4v8.5H5L2.7 11 0.4 8.5H2z"/><path d="M7.6 11h1.4V2.5h1.6L8.3 0 6 2.5h1.6z"/></g></svg>
<svg class="a" style="left:1006.5px;top:659px;" width="11" height="11" viewBox="0 0 11 11"><g fill="#cfd5db"><path d="M2 0h1.4v8.5H5L2.7 11 0.4 8.5H2z"/><path d="M7.6 11h1.4V2.5h1.6L8.3 0 6 2.5h1.6z"/></g></svg>
<svg class="a" style="left:1093px;top:659px;" width="11" height="11" viewBox="0 0 11 11"><g fill="#cfd5db"><path d="M2 0h1.4v8.5H5L2.7 11 0.4 8.5H2z"/><path d="M7.6 11h1.4V2.5h1.6L8.3 0 6 2.5h1.6z"/></g></svg>
<svg class="a" style="left:1223px;top:659px;" width="11" height="11" viewBox="0 0 11 11"><g fill="#cfd5db"><path d="M2 0h1.4v8.5H5L2.7 11 0.4 8.5H2z"/><path d="M7.6 11h1.4V2.5h1.6L8.3 0 6 2.5h1.6z"/></g></svg>
<svg class="a" style="left:1308.5px;top:659px;" width="11" height="11" viewBox="0 0 11 11"><g fill="#cfd5db"><path d="M2 0h1.4v8.5H5L2.7 11 0.4 8.5H2z"/><path d="M7.6 11h1.4V2.5h1.6L8.3 0 6 2.5h1.6z"/></g></svg>
<svg class="a" style="left:1388px;top:659px;" width="11" height="11" viewBox="0 0 11 11"><g fill="#cfd5db"><path d="M2 0h1.4v8.5H5L2.7 11 0.4 8.5H2z"/><path d="M7.6 11h1.4V2.5h1.6L8.3 0 6 2.5h1.6z"/></g></svg>
<svg class="a" style="left:1522.5px;top:659px;" width="11" height="11" viewBox="0 0 11 11"><g fill="#cfd5db"><path d="M2 0h1.4v8.5H5L2.7 11 0.4 8.5H2z"/><path d="M7.6 11h1.4V2.5h1.6L8.3 0 6 2.5h1.6z"/></g></svg>
<div class="a" style="left:273px;top:681px;width:1268px;height:3px;background:#ddd"></div>
<div class="a" style="left:273px;top:684px;width:1268px;height:77px;background:#f9f9f9"></div>
<div class="a" style="left:273px;top:760px;width:1268px;height:1px;background:#ddd"></div>
<div class="a" style="left:273px;top:837px;width:1268px;height:1px;background:#ddd"></div>
<div class="a" style="left:281px;top:692px;width:50px;height:30px;background:#fff;border:1px solid #ccc;border-radius:4px;border-radius:3px"></div>
<svg class="a" style="left:299px;top:699px;" width="14" height="14" viewBox="0 0 14 14"><circle cx="5.6" cy="5.6" r="3.9" stroke="#333" stroke-width="1.9" fill="none"/><path d="M8.3 8.3l3.4 3.4" stroke="#333" stroke-width="2.2" stroke-linecap="round"/></svg>
<div class="a" style="left:281px;top:769px;width:50px;height:30px;background:#fff;border:1px solid #ccc;border-radius:4px;border-radius:3px"></div>
<svg class="a" style="left:299px;top:776px;" width="14" height="14" viewBox="0 0 14 14"><circle cx="5.6" cy="5.6" r="3.9" stroke="#333" stroke-width="1.9" fill="none"/><path d="M8.3 8.3l3.4 3.4" stroke="#333" stroke-width="2.2" stroke-linecap="round"/></svg>
<div class="t" style="left:358.0px;top:695.15px;font-size:14px;color:#435466;font-weight:normal;">PG Test</div>
<div class="t" style="left:547.0px;top:695.15px;font-size:14px;color:#435466;font-weight:normal;">Tree Service</div>
<div class="t" style="left:666.5px;top:695.15px;font-size:14px;color:#435466;font-weight:normal;">1.00</div>
<div class="t" style="left:784.0px;top:695.15px;font-size:14px;color:#435466;font-weight:normal;">$150.00</div>
<div class="t" style="left:869.5px;top:695.15px;font-size:14px;color:#435466;font-weight:normal;">Proposal</div>
<div class="t" style="left:358.0px;top:772.15px;font-size:14px;color:#435466;font-weight:normal;">Clean Up</div>
<div class="t" style="left:547.0px;top:772.15px;font-size:14px;color:#435466;font-weight:normal;">Maintenance</div>
<div class="t" style="left:784.0px;top:772.15px;font-size:14px;color:#435466;font-weight:normal;">$150.00</div>
<div class="t" style="left:869.5px;top:772.15px;font-size:14px;color:#435466;font-weight:normal;">Proposal</div>
<div class="t" style="left:1249.5px;top:772.15px;font-size:14px;color:#435466;font-weight:normal;">Jan 01,</div>
<div class="t" style="left:1249.5px;top:792.15px;font-size:14px;color:#435466;font-weight:normal;">2024</div>
<div class="t" style="left:1335.5px;top:772.15px;font-size:14px;color:#435466;font-weight:normal;">Sep 01,</div>
<div class="t" style="left:1335.5px;top:792.15px;font-size:14px;color:#435466;font-weight:normal;">2024</div>
<svg class="a" style="left:1121px;top:695px;" width="12" height="12" viewBox="0 0 12 12"><path d="M1.5 1.5l9 9M10.5 1.5l-9 9" stroke="#e00" stroke-width="3"/></svg>
<svg class="a" style="left:1120px;top:772px;" width="14" height="12" viewBox="0 0 14 12"><path d="M1.2 6.5l3.6 3.6L12.8 1.8" stroke="#1a8a1a" stroke-width="3" fill="none"/></svg>
<div class="a" style="left:1415px;top:692px;width:64px;height:30px;background:#f0ad4e;border:1px solid #eea236;border-radius:3px"></div>
<svg class="a" style="left:1425.5px;top:698px;" width="18" height="18" viewBox="0 0 24 24"><path d="M3 17.25V21h3.75L17.81 9.94l-3.75-3.75L3 17.25zM20.71 7.04a1 1 0 0 0 0-1.41l-2.34-2.34a1 1 0 0 0-1.41 0l-1.83 1.83 3.75 3.75 1.83-1.83z" fill="#fff"/></svg>
<div class="t" style="left:1447.0px;top:700.84px;font-size:12px;color:#fff;font-weight:normal;">Edit</div>
<div class="a" style="left:1415px;top:722px;width:99px;height:30px;background:#d9534f;border:1px solid #d43f3a;border-radius:3px"></div>
<svg class="a" style="left:1425px;top:727.5px;" width="19" height="19" viewBox="0 0 24 24"><path d="M14 4l2.29 2.29-2.88 2.88 1.42 1.42 2.88-2.88L20 10V4zm-4 0H4v6l2.29-2.29 4.71 4.7V20h2v-8.41l-5.29-5.3z" fill="#fff"/></svg>
<div class="t" style="left:1447.0px;top:730.84px;font-size:12px;color:#fff;font-weight:normal;">Remove</div>
<svg class="a" style="left:1495px;top:736px;" width="8" height="4" viewBox="0 0 8 4"><path d="M0 0h8L4 4z" fill="#fff"/></svg>
<div class="a" style="left:1415px;top:769px;width:64px;height:30px;background:#f0ad4e;border:1px solid #eea236;border-radius:3px"></div>
<svg class="a" style="left:1425.5px;top:775px;" width="18" height="18" viewBox="0 0 24 24"><path d="M3 17.25V21h3.75L17.81 9.94l-3.75-3.75L3 17.25zM20.71 7.04a1 1 0 0 0 0-1.41l-2.34-2.34a1 1 0 0 0-1.41 0l-1.83 1.83 3.75 3.75 1.83-1.83z" fill="#fff"/></svg>
<div class="t" style="left:1447.0px;top:777.84px;font-size:12px;color:#fff;font-weight:normal;">Edit</div>
<div class="a" style="left:1415px;top:799px;width:99px;height:30px;background:#d9534f;border:1px solid #d43f3a;border-radius:3px"></div>
<svg class="a" style="left:1425px;top:804.5px;" width="19" height="19" viewBox="0 0 24 24"><path d="M14 4l2.29 2.29-2.88 2.88 1.42 1.42 2.88-2.88L20 10V4zm-4 0H4v6l2.29-2.29 4.71 4.7V20h2v-8.41l-5.29-5.3z" fill="#fff"/></svg>
<div class="t" style="left:1447.0px;top:807.84px;font-size:12px;color:#fff;font-weight:normal;">Remove</div>
<svg class="a" style="left:1495px;top:813px;" width="8" height="4" viewBox="0 0 8 4"><path d="M0 0h8L4 4z" fill="#fff"/></svg>
<div class="t" style="left:281.0px;top:848.75px;font-size:14px;color:#435466;font-weight:bold;">Total:</div>
<div class="t" style="left:666.5px;top:848.75px;font-size:14px;color:#435466;font-weight:normal;">1.00</div>
<div class="t" style="left:784.0px;top:848.75px;font-size:14px;color:#435466;font-weight:normal;">$300.00</div>
<div class="t" style="left:273.0px;top:891.95px;font-size:14px;color:#435466;font-weight:normal;">Showing 1 to 2 of 2 entries</div>
<div class="a" style="left:1374px;top:882px;width:167px;height:34px;background:#fff;border:1px solid #ddd;border-radius:4px"></div>
<div class="a" style="left:1453px;top:882px;width:34px;height:34px;background:#337ab7;border:1px solid #337ab7"></div>
<div class="t" style="left:1387.5px;top:891.85px;font-size:14px;color:#777;font-weight:normal;">Previous</div>
<div class="t" style="left:1466.0px;top:891.85px;font-size:14px;color:#fff;font-weight:normal;">1</div>
<div class="t" style="left:1499.5px;top:891.85px;font-size:14px;color:#777;font-weight:normal;">Next</div>
<div class="a" style="left:273px;top:918px;width:99px;height:44px;background:#ff3dff"></div>
<div class="a" style="left:278px;top:923px;width:89px;height:34px;background:#fff;border:1px solid #ccc;border-radius:0"></div>
<svg class="a" style="left:286px;top:932px;" width="14" height="14" viewBox="0 0 14 14"><circle cx="7" cy="7" r="7" fill="#333"/><path d="M7 3.3v7.4M3.3 7h7.4" stroke="#fff" stroke-width="2.2"/></svg>
<div class="t" style="left:303.0px;top:932.95px;font-size:14px;color:#333;font-weight:normal;">Add Job</div>
<div class="a" style="left:0px;top:963px;width:1572px;height:1px;background:#4a3d36"></div>
<svg class="a" style="left:0px;top:955px;" width="9" height="9" viewBox="0 0 9 9"><path d="M0 0v9h9C4 9 0 5 0 0z" fill="#5a4035"/></svg>
</body></html>
